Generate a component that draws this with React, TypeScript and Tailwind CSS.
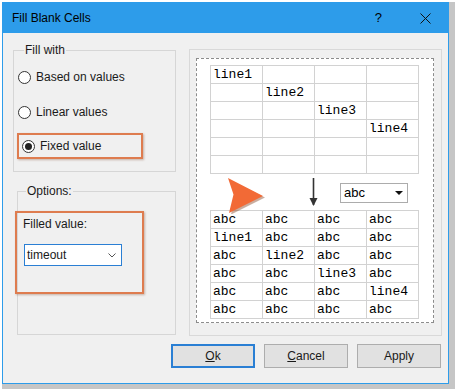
import React from "react";

const TOP_ROWS: string[][] = [
  ["line1", "", "", ""],
  ["", "line2", "", ""],
  ["", "", "line3", ""],
  ["", "", "", "line4"],
  ["", "", "", ""],
  ["", "", "", ""],
];

const BOTTOM_ROWS: string[][] = [
  ["abc", "abc", "abc", "abc"],
  ["line1", "abc", "abc", "abc"],
  ["abc", "line2", "abc", "abc"],
  ["abc", "abc", "line3", "abc"],
  ["abc", "abc", "abc", "line4"],
  ["abc", "abc", "abc", "abc"],
];

function Radio({ checked, label }: { checked?: boolean; label: string }) {
  return (
    <div className="flex h-[20px] items-center gap-[5px]">
      <span className="flex h-[13px] w-[13px] items-center justify-center rounded-full border border-[#333] bg-white">
        {checked && <span className="h-[7px] w-[7px] rounded-full bg-[#222]" />}
      </span>
      <span>{label}</span>
    </div>
  );
}

function Sheet({ rows }: { rows: string[][] }) {
  return (
    <table className="border-collapse bg-white font-['Liberation_Mono',monospace] text-[13px] text-black">
      <tbody>
        {rows.map((r, i) => (
          <tr key={i}>
            {r.map((c, j) => (
              <td
                key={j}
                className="h-[18px] w-[52px] border border-[#d2d2d2] p-0 pl-[2px] align-middle leading-[16px]"
              >
                {c}
              </td>
            ))}
          </tr>
        ))}
      </tbody>
    </table>
  );
}

function Button({ children, focused }: { children: React.ReactNode; focused?: boolean }) {
  return (
    <button
      className={
        focused
          ? "h-[24px] w-[84px] border-2 border-[#2a7fd4] bg-[#e1e1e1] text-[12px]"
          : "h-[24px] w-[84px] border border-[#adadad] bg-[#e1e1e1] text-[12px]"
      }
    >
      {children}
    </button>
  );
}

export default function App() {
  return (
    <div className="h-[389px] w-[455px] overflow-hidden border-l-2 border-t-2 border-white bg-[#c6c6c6] font-['Liberation_Sans',Arial,sans-serif] text-[12px] text-[#1a1a1a]">
      <div className="flex h-[382px] w-[447px] flex-col border border-[#2d9cea] bg-[#f0f0f0]">
        {/* title bar */}
        <div className="flex h-[30px] shrink-0 items-center bg-[#2d9cea] pl-[9px] text-black">
          <span className="text-[12px]">Fill Blank Cells</span>
          <span className="ml-auto text-[13px]">?</span>
          <svg className="ml-[38px] mr-[17px]" width="11" height="11" viewBox="0 0 11 11">
            <path d="M0.5 0.5L10.5 10.5M10.5 0.5L0.5 10.5" stroke="#111" strokeWidth="1" />
          </svg>
        </div>

        <div className="flex pl-[10px] pt-[9px]">
          {/* left column */}
          <div className="flex w-[163px] flex-col">
            <fieldset className="border border-[#d6d6d6] pb-[12px] pl-[4px]">
              <legend className="ml-[6px] px-[1px] leading-[16px]">Fill with</legend>
              <div className="mt-[9px]">
                <Radio label="Based on values" />
              </div>
              <div className="mt-[15px]">
                <Radio label="Linear values" />
              </div>
              <div className="-ml-[1px] mt-[11px] flex h-[26px] w-[126px] items-center border-2 border-[#de7c4f] pl-[3px] shadow-[1px_1px_2px_rgba(120,60,30,0.35)]">
                <Radio checked label="Fixed value" />
              </div>
            </fieldset>

            <fieldset className="ml-[4px] mt-[11px] w-[159px] border border-[#d6d6d6] pb-[40px]">
              <legend className="ml-[8px] px-[1px] leading-[16px]">Options:</legend>
              <div className="-ml-[3px] mt-[12px] h-[83px] w-[129px] border-2 border-[#de7c4f] pl-[6px] pt-[3px] shadow-[1px_1px_2px_rgba(120,60,30,0.35)]">
                <div className="leading-[16px]">Filled value:</div>
                <div className="ml-[1px] mt-[12px] flex h-[22px] w-[98px] items-center border border-[#2a7fd4] bg-white pl-[2px] pr-[5px]">
                  <span>timeout</span>
                  <svg className="ml-auto" width="8" height="5" viewBox="0 0 8 5">
                    <path d="M0.5 0.5L4 4L7.5 0.5" fill="none" stroke="#555" strokeWidth="1" />
                  </svg>
                </div>
              </div>
            </fieldset>
          </div>

          {/* preview panel */}
          <div className="ml-[13px] mt-[7px] h-[287px] w-[253px] border border-[#d9d9d9] pb-[12px] pl-[6px] pr-[7px] pt-[8px]">
            <div className="h-[265px] w-[238px] border border-dashed border-[#8c8c8c] bg-white pl-[13px] pt-[6px]">
              <Sheet rows={TOP_ROWS} />
              <div className="relative flex h-[36px] items-start">
                <svg className="absolute left-[17px] top-[3px] z-10" width="38" height="37" viewBox="0 0 38 37">
                  <path d="M2 2L37 19.5L3 36.5L7.5 18Z" fill="#8a4a2a" opacity="0.45" transform="translate(1 1)" />
                  <path d="M1 1L36 19L2 36L6.5 17.5Z" fill="#f26a36" />
                </svg>
                <svg className="ml-[99px] mt-[4px]" width="9" height="29" viewBox="0 0 9 29">
                  <path d="M4.5 0V27" stroke="#333" strokeWidth="1.6" />
                  <path d="M0.5 20L4.5 28L8.5 20Z" fill="#333" />
                </svg>
                <div className="ml-[22px] mt-[9px] flex h-[20px] w-[68px] items-center border border-[#acacac] bg-white pl-[3px] pr-[4px] text-[13px] text-black">
                  <span>abc</span>
                  <svg className="ml-auto" width="8" height="4" viewBox="0 0 8 4">
                    <path d="M0 0H8L4 4Z" fill="#111" />
                  </svg>
                </div>
              </div>
              <Sheet rows={BOTTOM_ROWS} />
            </div>
          </div>
        </div>

        {/* buttons */}
        <div className="mt-[8px] flex justify-end gap-[9px] pr-[7px]">
          <Button focused>
            <span className="underline">O</span>k
          </Button>
          <Button>
            <span className="underline">C</span>ancel
          </Button>
          <Button>Apply</Button>
        </div>
      </div>
    </div>
  );
}
